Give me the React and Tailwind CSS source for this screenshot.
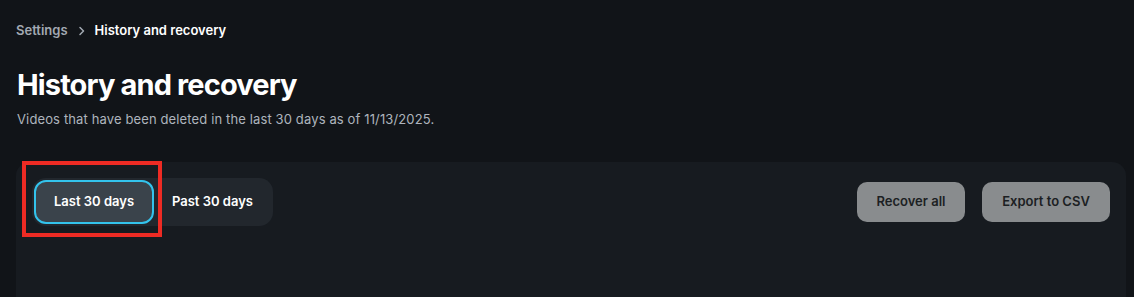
import React, { useState } from "react";

const App = () => {
  const [range, setRange] = useState("last");

  return (
    <div
      className="h-[297px] w-full bg-[#111418] text-white overflow-hidden"
      style={{ fontFamily: "Inter, 'Noto Sans', sans-serif" }}
    >
      <div className="px-4 pt-[21px]">
        {/* breadcrumb */}
        <div className="flex items-center gap-[9px] text-[13px] font-semibold">
          <span className="text-[#a3a9b2]">Settings</span>
          <svg width="9" height="10" viewBox="0 0 9 10" fill="none">
            <path d="M3 1.5L6.5 5L3 8.5" stroke="#a3a9b2" strokeWidth="1.5" strokeLinecap="round" strokeLinejoin="round" />
          </svg>
          <span className="text-white">History and recovery</span>
        </div>

        {/* title */}
        <h1 className="mt-[26px] text-[29px] leading-[36px] font-bold tracking-[-0.03em] pl-px">
          History and recovery
        </h1>
        <p className="mt-[7px] text-[13px] tracking-[0.01em] text-[#aeb4bd] pl-px">
          Videos that have been deleted in the last 30 days as of 11/13/2025.
        </p>

        {/* panel */}
        <div className="relative mt-[33px] mr-[-8px] h-[136px] rounded-t-[14px] bg-[#171b20] px-4 pt-4">
          <div className="flex items-start justify-between">
            <div className="flex items-center rounded-[14px] bg-[#22272d] p-[2px]">
              <button
                onClick={() => setRange("last")}
                className={
                  range === "last"
                    ? "h-[44px] w-[120px] rounded-[12px] border-2 border-[#33c3ec] bg-[#3a434b] text-[13px] font-semibold text-white"
                    : "h-[44px] w-[120px] rounded-[12px] border-2 border-transparent text-[13px] font-semibold text-white"
                }
              >
                Last 30 days
              </button>
              <button
                onClick={() => setRange("past")}
                className={
                  range === "past"
                    ? "h-[44px] w-[117px] rounded-[12px] border-2 border-[#33c3ec] bg-[#3a434b] text-[13px] font-semibold text-white"
                    : "h-[44px] w-[117px] rounded-[12px] border-2 border-transparent text-[13px] font-semibold text-white"
                }
              >
                Past 30 days
              </button>
            </div>

            <div className="mt-1 flex items-center gap-[17px]">
              <button className="h-[40px] w-[108px] rounded-[10px] bg-[#898c8e] text-[13px] font-semibold text-[#1c1f23]">
                Recover all
              </button>
              <button className="h-[40px] w-[128px] rounded-[10px] bg-[#898c8e] text-[13px] font-semibold text-[#1c1f23]">
                Export to CSV
              </button>
            </div>
          </div>

          {/* highlight annotation */}
          <div className="pointer-events-none absolute left-[6px] top-[-1px] h-[76px] w-[140px] border-4 border-[#ee2b24]" />
        </div>
      </div>
    </div>
  );
};

export default App;
